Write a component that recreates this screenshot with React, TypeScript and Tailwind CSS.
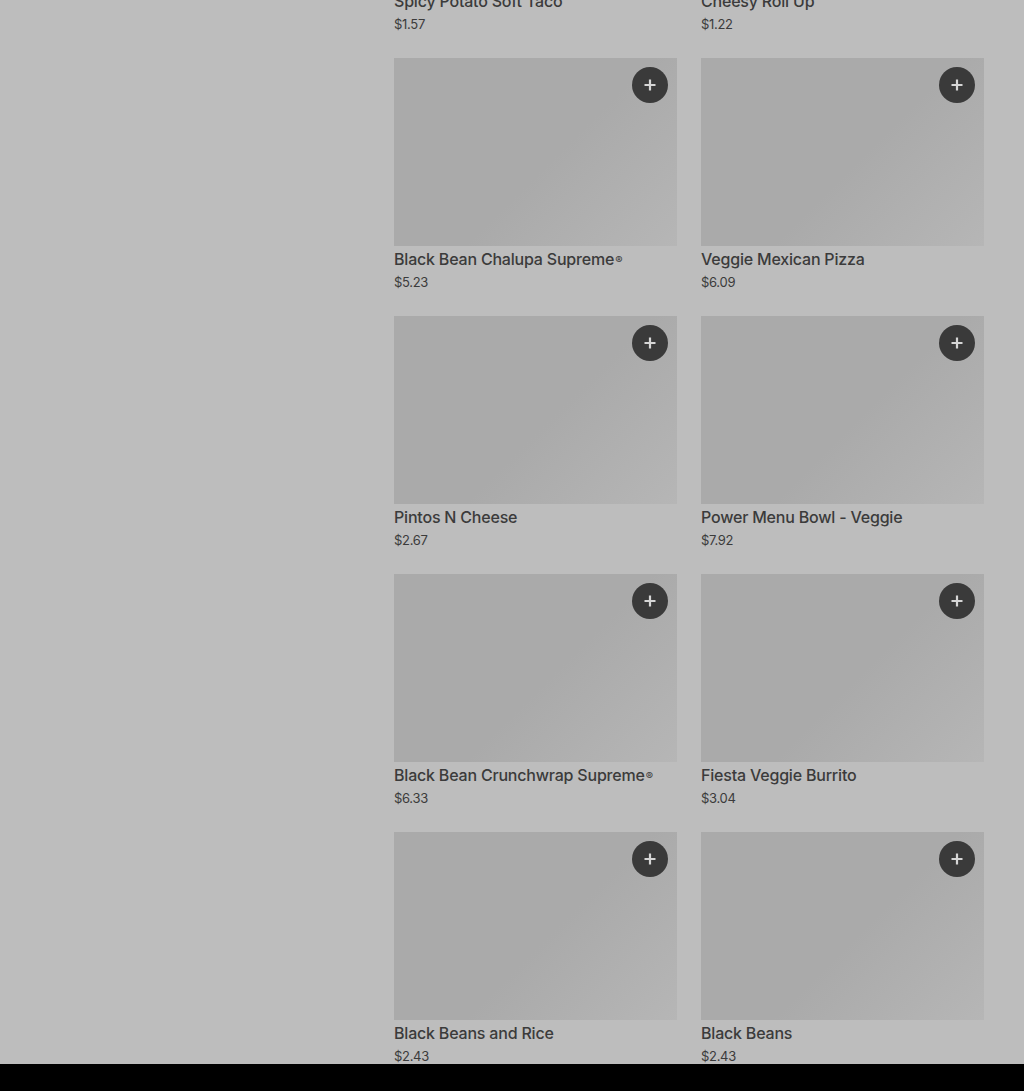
import React from "react";

const items: [string, string][] = [
  ["Spicy Potato Soft Taco", "$1.57"],
  ["Cheesy Roll Up", "$1.22"],
  ["Black Bean Chalupa Supreme®", "$5.23"],
  ["Veggie Mexican Pizza", "$6.09"],
  ["Pintos N Cheese", "$2.67"],
  ["Power Menu Bowl - Veggie", "$7.92"],
  ["Black Bean Crunchwrap Supreme®", "$6.33"],
  ["Fiesta Veggie Burrito", "$3.04"],
  ["Black Beans and Rice", "$2.43"],
  ["Black Beans", "$2.43"],
];

function Card({ name, price }: { name: string; price: string }) {
  const parts = name.split("®");
  return (
    <div className="flex flex-col pb-[25px]">
      <div className="relative h-[188px] bg-[linear-gradient(135deg,#aaaaaa_0%,#aaaaaa_55%,#b6b6b6_100%)]">
        <button className="absolute top-[9px] right-[9px] w-9 h-9 rounded-full bg-[#3a3a3a] flex items-center justify-center">
          <svg width="14" height="14" viewBox="0 0 14 14">
            <path d="M7 1.5v11M1.5 7h11" stroke="#d6d6d6" strokeWidth="2.2" />
          </svg>
        </button>
      </div>
      <div className="mt-[3px] text-[16px] leading-5 font-medium text-[#3b3b3b] whitespace-nowrap tracking-[-0.2px]">
        {parts[0]}
        {parts.length > 1 && <sup className="text-[11px] relative top-[-1px] ml-[1px]">®</sup>}
      </div>
      <div className="mt-[4px] text-[13px] leading-[18px] text-[#3b3b3b] tracking-[-0.3px]">{price}</div>
    </div>
  );
}

export default function App() {
  return (
    <div
      className="w-[1024px] h-[1091px] flex flex-col bg-[#bdbdbd] overflow-hidden"
      style={{ fontFamily: "Inter, 'Noto Sans', sans-serif" }}
    >
      <div className="flex-1 flex overflow-hidden">
        <div className="w-[394px] shrink-0" />
        <div className="w-[590px] shrink-0">
          <div className="grid grid-cols-2 gap-x-6 mt-[-200px]">
            {items.map(([n, p]) => (
              <Card key={n} name={n} price={p} />
            ))}
          </div>
        </div>
      </div>
      <div className="h-[27px] bg-black shrink-0" />
    </div>
  );
}
